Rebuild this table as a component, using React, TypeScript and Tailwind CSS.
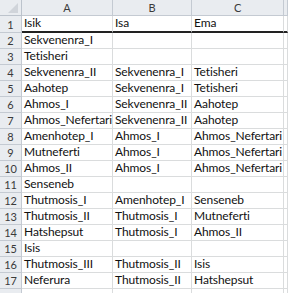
const rows: [string, string, string][] = [
  ['Isik', 'Isa', 'Ema'],
  ['Sekvenenra_I', '', ''],
  ['Tetisheri', '', ''],
  ['Sekvenenra_II', 'Sekvenenra_I', 'Tetisheri'],
  ['Aahotep', 'Sekvenenra_I', 'Tetisheri'],
  ['Ahmos_I', 'Sekvenenra_II', 'Aahotep'],
  ['Ahmos_Nefertari', 'Sekvenenra_II', 'Aahotep'],
  ['Amenhotep_I', 'Ahmos_I', 'Ahmos_Nefertari'],
  ['Mutneferti', 'Ahmos_I', 'Ahmos_Nefertari'],
  ['Ahmos_II', 'Ahmos_I', 'Ahmos_Nefertari'],
  ['Senseneb', '', ''],
  ['Thutmosis_I', 'Amenhotep_I', 'Senseneb'],
  ['Thutmosis_II', 'Thutmosis_I', 'Mutneferti'],
  ['Hatshepsut', 'Thutmosis_I', 'Ahmos_II'],
  ['Isis', '', ''],
  ['Thutmosis_III', 'Thutmosis_II', 'Isis'],
  ['Neferura', 'Thutmosis_II', 'Hatshepsut'],
  ['', '', ''],
];

const cols = 'grid grid-cols-[22px_91px_79px_92px_1fr]';

export default function App() {
  return (
    <div className="w-[288px] h-[293px] overflow-hidden bg-white font-['Lato',sans-serif] text-[12px] tracking-[-0.1px] text-[#111]">
      {/* column headers */}
      <div className={`${cols} h-[16px]`}>
        <div className="relative bg-[#e9ecf0] border-r border-b border-[#bcc3cc]">
          <svg className="absolute right-[3px] bottom-[2px]" width="10" height="10" viewBox="0 0 10 10">
            <polygon points="10,0 10,10 0,10" fill="#d0d4da" />
          </svg>
        </div>
        {['A', 'B', 'C', ''].map((c, i) => (
          <div
            key={i}
            className="bg-[#e9ecf0] border-r border-b border-[#c4cad2] flex items-center justify-center text-[11px] text-[#3a3a3a] leading-none"
          >
            {c}
          </div>
        ))}
      </div>

      {rows.map((r, i) => {
        const first = i === 0;
        const last = i === rows.length - 1;
        return (
          <div key={i} className={`${cols} ${first ? 'h-[17px]' : 'h-[16px]'}`}>
            <div className="bg-[#e9ecf0] border-r border-b border-[#c4cad2] flex items-end pb-[2px] justify-center text-[11px] text-[#3a3a3a] leading-none">
              {last ? '' : i + 1}
            </div>
            {[...r, ''].map((v, j) => (
              <div
                key={j}
                className={`border-r border-[#dadcdd] whitespace-nowrap pl-[2px] leading-none flex items-end pb-[2px] ${
                  first ? 'border-b-2 border-b-[#222222]' : 'border-b border-b-[#dadcdd]'
                }`}
              >
                {v}
              </div>
            ))}
          </div>
        );
      })}
    </div>
  );
}
